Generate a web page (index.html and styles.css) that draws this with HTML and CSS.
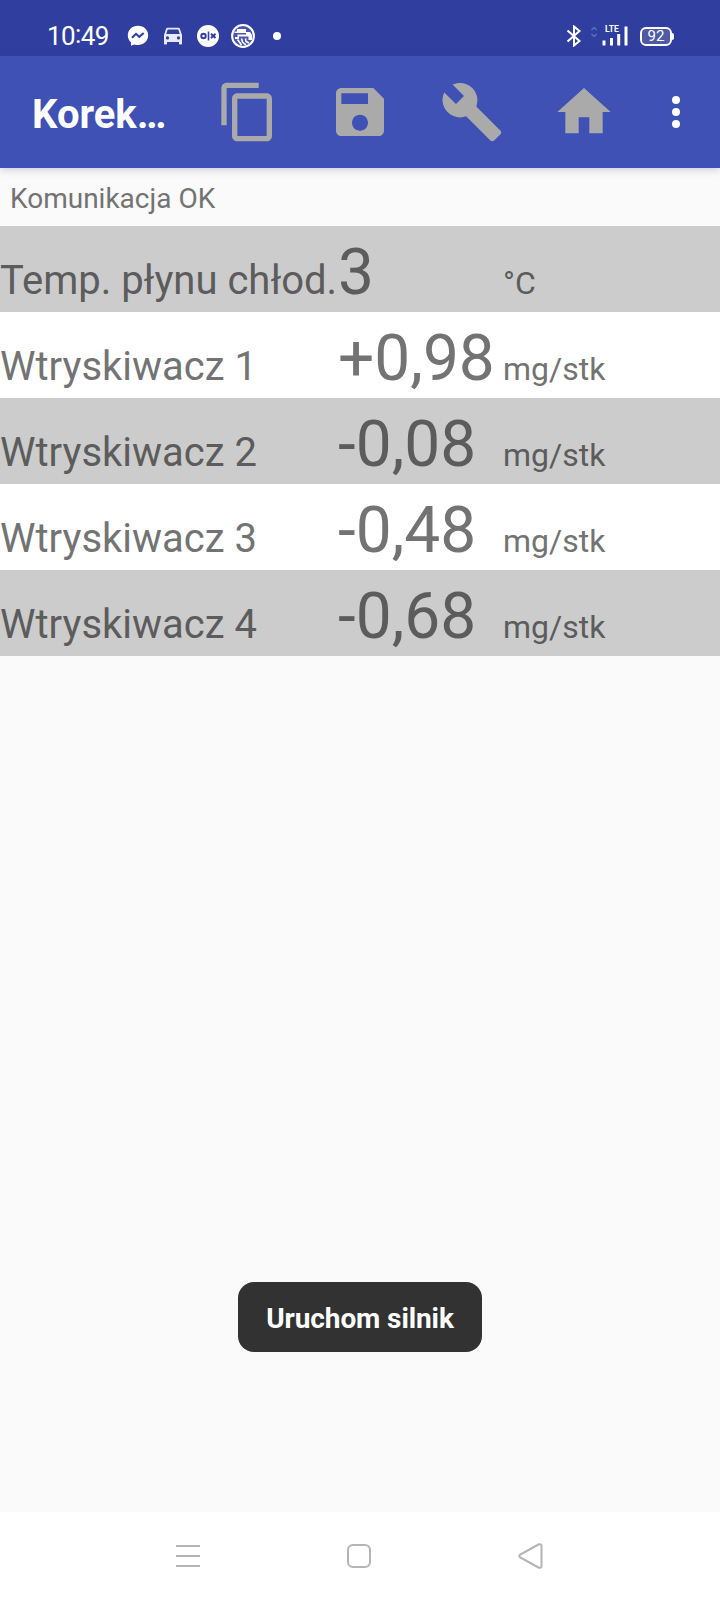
FILE: index.html
```html
<!DOCTYPE html>
<html lang="pl">
<head>
    <meta charset="UTF-8">
    <title>Korekty</title>
    <link rel="stylesheet" href="styles.css">
</head>
<body>

<div class="statusbar">
    <span class="time">10<span class="colon">:</span>49</span>
    <div class="notifications">
        <!-- messenger -->
        <svg width="22" height="22" viewBox="0 0 22 22">
            <path fill="#fff" d="M11 .7C5.200.7.8 4.900.8 10.300c0 3 1.200 5.400 3.200 7.100v3.300l3.300-1.200c1.100.4 2.400.5 3.700.5 5.800 0 10.200-4.200 10.200-9.700S16.800.7 11 .7z"/>
            <path fill="none" stroke="#303f9f" stroke-width="2" d="M5 12.800l4-4 3.300 3 4.400-3.800"/>
        </svg>
        <!-- car -->
        <svg width="20" height="18" viewBox="0 0 20 18">
            <path fill="#e8eaf8" fill-rule="evenodd" d="M4.500.8h11c.7 0 1.200.4 1.400 1L19 8v8.500c0 .6-.4 1-1 1h-1c-.6 0-1-.4-1-1V15H4v1.500c0 .6-.4 1-1 1H2c-.6 0-1-.4-1-1V8l2.100-6.200c.2-.6.7-1 1.400-1zM4.700 2.400L3.200 7h13.600l-1.500-4.600zM4.500 9.300a1.600 1.600 0 1 0 0 3.200 1.600 1.600 0 0 0 0-3.200zm11 0a1.600 1.600 0 1 0 0 3.200 1.600 1.600 0 0 0 0-3.200z"/>
        </svg>
        <!-- olx -->
        <svg width="22" height="22" viewBox="0 0 22 22">
            <circle cx="11" cy="11" r="11" fill="#fff"/>
            <g fill="none" stroke="#303f9f">
                <circle cx="6.500" cy="11" r="2.200" stroke-width="2"/>
                <path stroke-width="1.600" d="M11.500 6.500v9"/>
                <path stroke-width="2" d="M14 8.800l4.500 4.200M18.500 8.800L14 13"/>
            </g>
        </svg>
        <!-- round badge -->
        <svg class="badge" width="24" height="24" viewBox="0 0 24 24">
            <circle cx="12" cy="12" r="10.900" fill="#4a57ab" stroke="#fff" stroke-width="2"/>
            <path fill="#fff" d="M6 5h9v3h4l2 3v5h-3.500v-3.500H8V15H4v-2h2.500v-2.500H15V9H3.500V7.500H6z"/>
            <path fill="none" stroke="#fff" stroke-width="1.600" d="M6.500 15.500l4 5.500M10.500 14.500l1 3.500 3.500 3M14.500 14.500l.5 3 3 1.500"/>
        </svg>
        <span class="dot"></span>
    </div>
    <div class="system">
        <svg class="bluetooth" width="16" height="22" viewBox="0 0 16 22">
            <path fill="none" stroke="#fff" stroke-width="2" d="M1.500 5.500l12 10.500L8 20.500v-19L13.500 6l-12 10.500"/>
        </svg>
        <svg class="arrows" width="8" height="12" viewBox="0 0 8 12">
            <path fill="none" stroke="#5f6cbc" stroke-width="1.500" d="M1.500 4L4 1.500 6.500 4M1.500 8L4 10.500 6.500 8"/>
        </svg>
        <div class="signal">
            <span class="lte">LTE</span>
            <svg width="26" height="22" viewBox="0 0 26 22">
                <path stroke="#fff" stroke-width="3" d="M2 15.500v5M9.500 13v7.500M16.700 9v11.500M24 1.500v19"/>
            </svg>
        </div>
        <div class="battery">92</div>
    </div>
</div>

<div class="toolbar">
    <h1>Korek…</h1>
    <div class="actions">
        <svg viewBox="0 0 24 24"><path d="M16 1H4c-1.100 0-2 .9-2 2v14h2V3h12V1zm3 4H8c-1.100 0-2 .9-2 2v14c0 1.100.9 2 2 2h11c1.100 0 2-.9 2-2V7c0-1.100-.9-2-2-2zm0 16H8V7h11v14z"/></svg>
        <svg viewBox="0 0 24 24"><path d="M17 3H5c-1.110 0-2 .9-2 2v14c0 1.100.89 2 2 2h14c1.100 0 2-.9 2-2V7l-4-4zm-5 16c-1.660 0-3-1.340-3-3s1.340-3 3-3 3 1.340 3 3-1.340 3-3 3zm3-10H5V5h10v4z"/></svg>
        <svg viewBox="0 0 24 24"><path d="M22.700 19l-9.100-9.100c.9-2.300.4-5-1.500-6.900-2-2-5-2.400-7.400-1.300L9 6 6 9 1.600 4.700C.4 7.100.9 10.100 2.900 12.100c1.900 1.900 4.600 2.400 6.900 1.500l9.100 9.100c.4.4 1 .4 1.400 0l2.300-2.300c.5-.4.5-1.100.1-1.400z"/></svg>
        <svg viewBox="0 0 24 24"><path d="M10 20v-6h4v6h5v-8h3L12 3 2 12h3v8z"/></svg>
    </div>
    <svg class="more" viewBox="0 0 24 24"><circle cx="12" cy="6" r="2"/><circle cx="12" cy="12" r="2"/><circle cx="12" cy="18" r="2"/></svg>
</div>

<main>
    <p class="connection">Komunikacja OK</p>

    <div class="row">
        <span class="label">Temp. płynu chłod.</span>
        <span class="value">3</span>
        <span class="unit">°C</span>
    </div>
    <div class="row">
        <span class="label">Wtryskiwacz 1</span>
        <span class="value">+0,98</span>
        <span class="unit">mg/stk</span>
    </div>
    <div class="row">
        <span class="label">Wtryskiwacz 2</span>
        <span class="value">-0,08</span>
        <span class="unit">mg/stk</span>
    </div>
    <div class="row">
        <span class="label">Wtryskiwacz 3</span>
        <span class="value">-0,48</span>
        <span class="unit">mg/stk</span>
    </div>
    <div class="row">
        <span class="label">Wtryskiwacz 4</span>
        <span class="value">-0,68</span>
        <span class="unit">mg/stk</span>
    </div>
</main>

<div class="toast">Uruchom silnik</div>

<div class="navbar">
    <svg width="24" height="26" viewBox="0 0 24 26"><path d="M0 3h24M0 13h24M0 23h24"/></svg>
    <svg width="24" height="26" viewBox="0 0 24 26"><rect x="1" y="2" width="22" height="22" rx="5"/></svg>
    <svg width="25" height="26" viewBox="0 0 25 26"><path d="M20.500 1.500L2.200 11.600q-1.800 1.400 0 2.800l18.300 10.100q3 1 3-1.500V3q0-2.500-3-1.500z"/></svg>
</div>

</body>
</html>
```
FILE: styles.css
```css
* {
    box-sizing: border-box;
}

body {
    margin: 0;
    height: 1600px;
    display: flex;
    flex-direction: column;
    background: #fafafa;
    font-family: Roboto, sans-serif;
    color: #737373;
    overflow: hidden;
}

svg {
    display: block;
    flex: none;
}

/* status bar */
.statusbar {
    display: flex;
    align-items: center;
    height: 56px;
    padding: 16px 46px 0 47px;
    background: #303f9f;
    color: #fff;
}

.time {
    width: 80px;
    font-size: 26px;
    line-height: 40px;
    letter-spacing: -0.6px;
}

.colon {
    position: relative;
    top: -2px;
}

.notifications {
    display: flex;
    align-items: center;
    gap: 14px;
}

.badge {
    margin-left: -2px;
}

.dot {
    width: 8px;
    height: 8px;
    margin-left: 4px;
    border-radius: 50%;
    background: #fff;
}

.system {
    display: flex;
    align-items: center;
    margin-left: auto;
}

.arrows {
    margin: -8px 4px 0 8px;
}

.signal {
    position: relative;
    margin-right: 12px;
}

.lte {
    position: absolute;
    left: 3px;
    top: 0;
    font-size: 8.5px;
    line-height: 9px;
    font-weight: bold;
}

.battery {
    position: relative;
    width: 32px;
    height: 19px;
    margin-right: 2px;
    border: 2px solid #fff;
    border-radius: 6px;
    background: #4f5aa6;
    font-size: 15px;
    line-height: 15px;
    text-align: center;
}

.battery::after {
    content: "";
    position: absolute;
    right: -4px;
    top: 4px;
    width: 2px;
    height: 7px;
    border-radius: 0 2px 2px 0;
    background: #fff;
}

/* toolbar */
.toolbar {
    display: flex;
    align-items: center;
    height: 112px;
    padding: 0 20px 0 32px;
    background: #3f51b5;
    box-shadow: 0 1px 8px rgba(40, 40, 110, 0.25);
}

.toolbar h1 {
    width: 184px;
    margin: 6px 0 0;
    color: #fff;
    font-size: 40px;
    font-weight: bold;
    line-height: 48px;
}

.actions {
    display: flex;
    gap: 48px;
}

.actions svg {
    width: 64px;
    height: 64px;
    fill: #aaa;
}

.more {
    width: 48px;
    height: 48px;
    margin-left: auto;
    fill: #fff;
}

/* readings */
main {
    flex: 1;
}

.connection {
    margin: 0;
    height: 58px;
    padding: 14px 10px 0;
    font-size: 28px;
    line-height: 33px;
}

.row {
    display: flex;
    align-items: baseline;
    height: 86px;
    padding-top: 7px;
    background: #fff;
}

.row:nth-child(even) {
    background: #ccc;
    color: #5c5c5c;
}

.label {
    width: 338px;
    font-size: 40px;
    white-space: nowrap;
}

.value {
    width: 165px;
    font-size: 64px;
    line-height: 80px;
}

.unit {
    font-size: 32px;
}

.toast {
    align-self: center;
    width: 244px;
    height: 70px;
    margin-bottom: 160px;
    border-radius: 16px;
    background: #323232;
    color: #fff;
    font-size: 28px;
    font-weight: bold;
    letter-spacing: -0.1px;
    line-height: 74px;
    text-align: center;
    white-space: nowrap;
}

/* system navigation */
.navbar {
    display: flex;
    justify-content: space-between;
    align-items: center;
    height: 88px;
    padding: 0 177px 0 176px;
    background: #fff;
}

.navbar svg {
    fill: none;
    stroke: #b4b4b4;
    stroke-width: 2;
}
```
